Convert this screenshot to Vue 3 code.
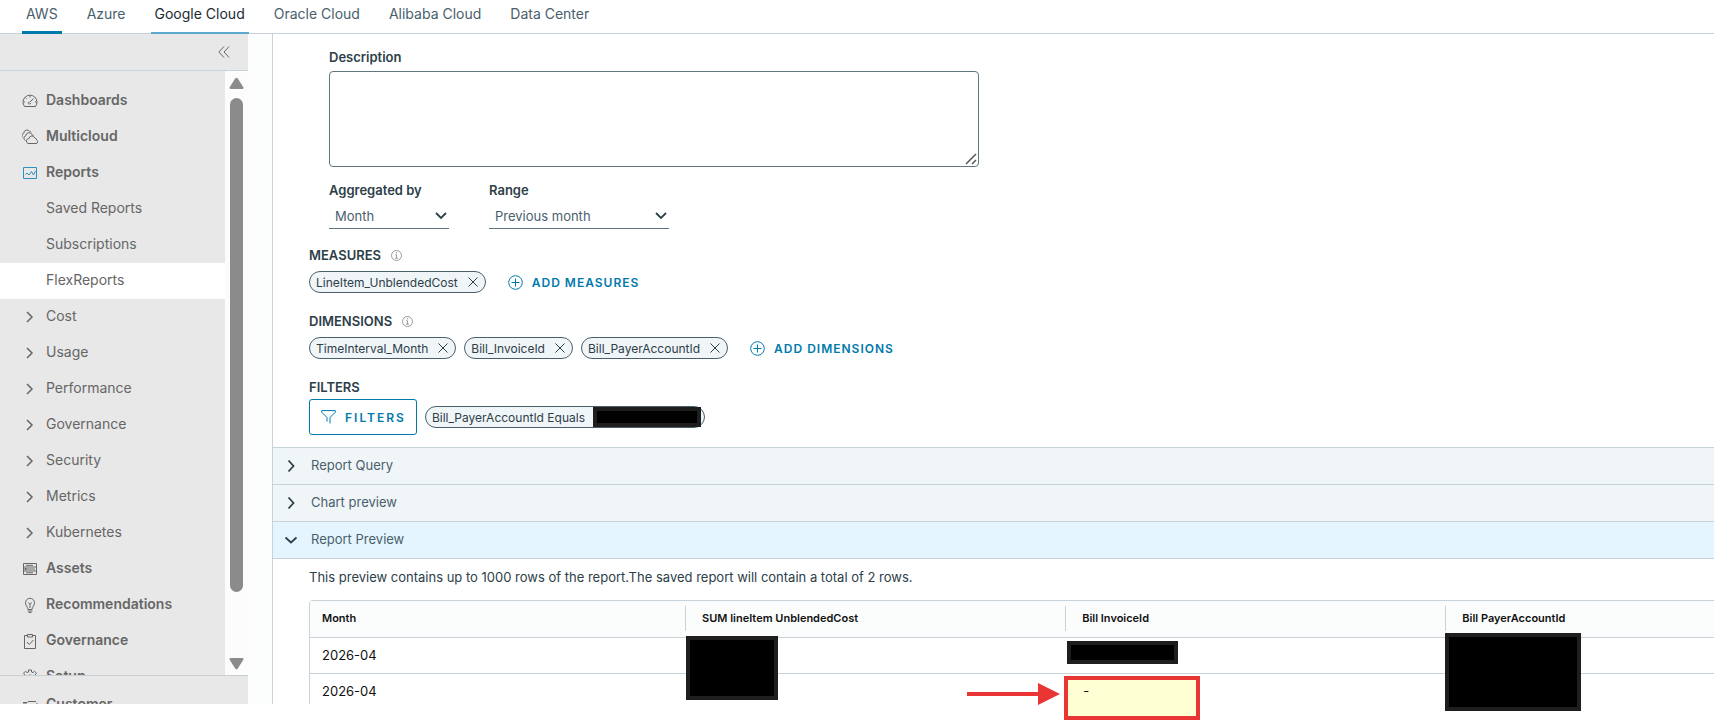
<template>
  <div class="app">
    <header class="tabs">
      <a
        v-for="tab in tabs"
        :key="tab"
        href="#"
        :class="['tab', { active: tab === 'AWS', hovered: tab === 'Google Cloud' }]"
        @click.prevent
      >{{ tab }}</a>
    </header>

    <div class="body">
      <aside class="sidebar">
        <div class="sidebar-top">
          <button class="collapse" aria-label="Collapse menu">
            <svg width="12" height="12" viewBox="0 0 12 12"><path d="M6 .5.8 6 6 11.5M11.2.5 6 6l5.2 5.5" /></svg>
          </button>
        </div>
        <div class="sidebar-scroll">
          <nav class="nav">
            <a
              v-for="item in menu"
              :key="item.icon + item.name"
              href="#"
              :class="['nav-item', item.type, { selected: item.name === 'FlexReports' }]"
              @click.prevent
            >
              <span class="nav-icon">
                <svg v-if="item.icon === 'chevron'" class="chevron" width="16" height="16" viewBox="0 0 16 16"><path d="m5 3 5 5-5 5" /></svg>
                <svg v-else-if="item.icon" :class="item.icon" width="16" height="16" viewBox="0 0 16 16"><path :d="icons[item.icon]" /></svg>
              </span>
              <span class="nav-text">{{ item.name }}</span>
            </a>
          </nav>
          <div class="scrollbar">
            <svg width="15" height="13" viewBox="0 0 15 13"><path d="M6.2 1.500q1.300-1.700 2.600 0l5.400 8.500q.9 2-1 2H1.800q-1.900 0-1-2z" /></svg>
            <div class="thumb"></div>
            <svg width="15" height="13" viewBox="0 0 15 13"><path d="M6.2 11.500q1.300 1.700 2.600 0l5.400-8.500q.9-2-1-2H1.800q-1.900 0-1 2z" /></svg>
          </div>
        </div>
        <div class="sidebar-bottom">
          <a href="#" class="nav-item group" @click.prevent>
            <span class="nav-icon">
              <svg width="16" height="16" viewBox="0 0 16 16"><path :d="icons.customer" /></svg>
            </span>
            <span class="nav-text">Customer</span>
          </a>
        </div>
      </aside>

      <main class="content">
        <form class="form" @submit.prevent>
          <div class="fields">
            <label class="label" for="description">Description</label>
            <div class="textarea-wrap">
              <textarea id="description" v-model="description"></textarea>
              <svg class="grip" width="12" height="12" viewBox="0 0 12 12"><path d="M1 11 11 1M7 11l4-4" /></svg>
            </div>
            <div class="selects">
              <div class="month">
                <label class="label" for="aggregated">Aggregated by</label>
                <div class="select-wrap">
                  <select id="aggregated"><option>Month</option></select>
                  <svg width="12" height="8" viewBox="0 0 12 8"><path d="M1 1l5 5 5-5" /></svg>
                </div>
              </div>
              <div class="range">
                <label class="label" for="range">Range</label>
                <div class="select-wrap">
                  <select id="range"><option>Previous month</option></select>
                  <svg width="12" height="8" viewBox="0 0 12 8"><path d="M1 1l5 5 5-5" /></svg>
                </div>
              </div>
            </div>
          </div>

          <section v-for="group in groups" :key="group.title" class="group-block">
            <h3 class="label heading">
              {{ group.title }}
              <svg class="info" width="11" height="11" viewBox="0 0 11 11"><circle cx="5.5" cy="5.5" r="5" /><path d="M5.500 2.200v1.200M4.200 4.800h1.300V8M4 8.200h3" /></svg>
            </h3>
            <div class="chips">
              <span v-for="chip in group.chips" :key="chip" class="chip">
                {{ chip }}
                <button class="remove" type="button" :aria-label="'Remove ' + chip">
                  <svg width="10" height="10" viewBox="0 0 10 10"><path d="m.5.5 9 9m0-9-9 9" /></svg>
                </button>
              </span>
              <button class="add" type="button">
                <svg width="15" height="15" viewBox="0 0 15 15"><circle cx="7.5" cy="7.5" r="6.8" /><path d="M7.500 3.500v8m-4-4h8" /></svg>
                {{ group.action }}
              </button>
            </div>
          </section>

          <section>
            <h3 class="label heading">FILTERS</h3>
            <div class="chips filters">
              <button class="filter-btn" type="button">
                <svg width="15" height="14" viewBox="0 0 15 14"><path d="M.7.6h13.600v1.600L9 7.500v6M.7.6v1.600L6 7.500v4" /></svg>
                FILTERS
              </button>
              <span class="chip filter-chip">Bill_PayerAccountId Equals<span class="redacted inline"></span></span>
            </div>
          </section>
        </form>

        <div class="accordion">
          <button v-for="panel in panels" :key="panel" :class="['panel', { open: panel === 'Report Preview' }]">
            <svg width="14" height="14" viewBox="0 0 14 14"><path d="m4.500 1.500 5 5.500-5 5.500" /></svg>
            <span>{{ panel }}</span>
          </button>
        </div>

        <section class="preview">
          <p>This preview contains up to 1000 rows of the report.The saved report will contain a total of 2 rows.</p>
          <table>
            <thead>
              <tr>
                <th v-for="col in columns" :key="col"><span>{{ col }}</span></th>
              </tr>
            </thead>
            <tbody>
              <tr>
                <td>2026-04</td>
                <td><span class="redacted cost"></span></td>
                <td><span class="redacted invoice"></span></td>
                <td><span class="redacted payer"></span></td>
              </tr>
              <tr>
                <td>2026-04</td>
                <td></td>
                <td>
                  <svg class="arrow" width="94" height="24" viewBox="0 0 94 24"><path d="M0 10h71V1l22 11-22 11v-9H0z" /></svg>
                  <span class="callout">-</span>
                </td>
                <td></td>
              </tr>
            </tbody>
          </table>
        </section>
      </main>
    </div>
  </div>
</template>

<script setup>
import { ref } from 'vue'

const description = ref('')

const tabs = ['AWS', 'Azure', 'Google Cloud', 'Oracle Cloud', 'Alibaba Cloud', 'Data Center']

const menu = [
  { name: 'Dashboards', icon: 'gauge', type: 'group' },
  { name: 'Multicloud', icon: 'clouds', type: 'group' },
  { name: 'Reports', icon: 'chart', type: 'group' },
  { name: 'Saved Reports', icon: '', type: 'child' },
  { name: 'Subscriptions', icon: '', type: 'child' },
  { name: 'FlexReports', icon: '', type: 'child' },
  { name: 'Cost', icon: 'chevron', type: 'child' },
  { name: 'Usage', icon: 'chevron', type: 'child' },
  { name: 'Performance', icon: 'chevron', type: 'child' },
  { name: 'Governance', icon: 'chevron', type: 'child' },
  { name: 'Security', icon: 'chevron', type: 'child' },
  { name: 'Metrics', icon: 'chevron', type: 'child' },
  { name: 'Kubernetes', icon: 'chevron', type: 'child' },
  { name: 'Assets', icon: 'assets', type: 'group' },
  { name: 'Recommendations', icon: 'bulb', type: 'group' },
  { name: 'Governance', icon: 'clipboard', type: 'group' },
  { name: 'Setup', icon: 'gear', type: 'group' }
]

const icons = {
  gauge: 'M2.500 13.500A7 7 0 1 1 13.500 13.500zM8 3v1.500M1.500 9H3M13 9h1.500M3.500 4.800l1 1M7.500 9.500l4-4M7 8.800a1.200 1.200 0 1 0 1.700 1.200',
  clouds: 'M6 14.500h8a1.800 1.800 0 0 0 .8-3.400 2.500 2.500 0 0 0-2-2.100A3 3 0 0 0 7 9.500a2.600 2.600 0 0 0-1 5M3.500 11.500a2.400 2.400 0 0 1 .3-4.600 3.200 3.200 0 0 1 6.200-1.100 2 2 0 0 1 1.500 1M1 8.500a2.400 2.400 0 0 1 .8-4.300 3.200 3.200 0 0 1 5.900-1.700 2 2 0 0 1 1.600.8',
  chart: 'M1.500 2.500h13v11h-13zM3.500 9.500l1.500-1.500L7 10l2.500-3.500L11.500 10l2-4',
  assets: 'M1.500 2.500h13v11h-13zM1.500 6h13M1.500 10h13M4 4.300h7M4 8h9M4 11.800h7M2.500 7.500h2M2.500 8.500h2',
  bulb: 'M6 12.500C6 10 3.500 9 3.500 5.800a4.500 4.500 0 0 1 9 0C12.500 9 10 10 10 12.500zM5.500 14h5M6.500 15.500h3M8 11V7.500M6.500 5.500 8 7.500l1.500-2',
  clipboard: 'M5 2.500H2.500v13h11v-13H11M5.500 1.500h5v2.500h-5zM5 9l2.200 2.500L11.500 7',
  gear: 'M6.500 1h3v2l1.500.6 1.500-1.400 2 2L13 6l.5 1.500h2v3h-2L13 12l1.500 1.500-2 2L11 14l-1.500.5v1h-3v-1L5 14l-1.500 1.500-2-2L3 12l-.5-1.500h-2v-3h2L3 6 1.500 4.200l2-2L5 3.600 6.500 3zM8 6a3 3 0 1 0 .1 0',
  customer: 'M1 5.500h4l1-1h8M1 7h4v6H1M15 6v6'
}

const groups = [
  { title: 'MEASURES', chips: ['LineItem_UnblendedCost'], action: 'ADD MEASURES' },
  {
    title: 'DIMENSIONS',
    chips: ['TimeInterval_Month', 'Bill_InvoiceId', 'Bill_PayerAccountId'],
    action: 'ADD DIMENSIONS'
  }
]

const panels = ['Report Query', 'Chart preview', 'Report Preview']
const columns = ['Month', 'SUM lineItem UnblendedCost', 'Bill InvoiceId', 'Bill PayerAccountId']
</script>

<style>
body {
  overflow: hidden;
  background: #fff;
}
</style>

<style scoped>
.app {
  height: 100vh;
  padding-bottom: 16px;
  display: flex;
  flex-direction: column;
  color: #2d4048;
  font-family: Inter, "Liberation Sans", sans-serif;
  font-size: 13px;
}

.app *,
.app {
  box-sizing: border-box;
}

button {
  padding: 0;
  border: none;
  background: none;
  font: inherit;
  color: inherit;
  cursor: pointer;
}

svg {
  flex: none;
  fill: none;
  stroke: currentColor;
}

.tabs {
  flex: none;
  display: flex;
  gap: 21px;
  height: 34px;
  padding-left: 22px;
  border-bottom: 1px solid #c8d3d9;
}

.tab {
  height: 34px;
  padding: 0 4px;
  font-size: 14px;
  line-height: 28px;
  color: #49606c;
  text-decoration: none;
}

.tab.active {
  border-bottom: 3px solid #0079ad;
}

.tab.hovered {
  color: #1b2a32;
  border-bottom: 2px solid #5aa9cc;
}

.body {
  flex: 1;
  display: flex;
  min-height: 0;
}

.sidebar {
  flex: none;
  display: flex;
  flex-direction: column;
  width: 248px;
  background: #e8e8e8;
  color: #666;
}

.sidebar-top {
  flex: none;
  display: flex;
  justify-content: flex-end;
  align-items: center;
  height: 37px;
  padding-right: 18px;
  border-bottom: 1px solid #c8d3d9;
}

.collapse {
  display: flex;
}

.sidebar-scroll {
  flex: 1;
  display: flex;
  min-height: 0;
}

.nav {
  flex: 1;
  padding-top: 12px;
  overflow: hidden;
}

.nav-item {
  display: flex;
  align-items: center;
  gap: 8px;
  height: 36px;
  padding-left: 22px;
  font-size: 14px;
  line-height: 20px;
  color: #666;
  text-decoration: none;
}

.nav-item.group {
  font-weight: 600;
}

.nav-item.selected {
  background: #fff;
}

.nav-text {
  padding-bottom: 2px;
}

.nav-icon {
  display: flex;
  width: 16px;
  height: 16px;
}

.chevron {
  stroke-width: 1.5;
}

.chart {
  color: #2f8fc0;
}

.scrollbar {
  flex: none;
  display: flex;
  flex-direction: column;
  align-items: center;
  width: 23px;
  padding: 6px 0 5px;
  background: #fcfcfc;
}

.scrollbar svg {
  fill: #8b8b8b;
  stroke: none;
}

.thumb {
  flex: 1;
  width: 13px;
  margin: 8px 0 65px;
  border-radius: 7px;
  background: #8b8b8b;
}

.sidebar-bottom {
  flex: none;
  height: 29px;
  padding-top: 11px;
  border-top: 1px solid #c8d0d3;
  overflow: hidden;
}

.content {
  flex: 1;
  min-width: 0;
  margin-left: 24px;
  border-left: 1px solid #c8d3d9;
  box-shadow: -24px 0 #fcfdfd;
  overflow-x: clip;
}

.form {
  padding: 13px 36px 12px;
}

.fields {
  margin-bottom: 16px;
  padding-left: 20px;
}

.label {
  display: block;
  margin: 0;
  font-size: 13px;
  font-weight: 600;
  line-height: 20px;
}

.textarea-wrap {
  position: relative;
  width: 650px;
  max-width: 100%;
  height: 96px;
  margin: 4px 0 13px;
}

textarea {
  display: block;
  width: 100%;
  height: 100%;
  border: 1px solid #60767f;
  border-radius: 4px;
  background: #fff;
  font: inherit;
  resize: none;
}

.grip {
  position: absolute;
  right: 2px;
  bottom: 2px;
  stroke: #555;
  stroke-width: 1.5;
}

.selects {
  display: flex;
  gap: 40px;
}

.month {
  width: 120px;
}

.range {
  width: 180px;
}

.select-wrap {
  position: relative;
  height: 24px;
  margin-top: 5px;
}

.select-wrap svg {
  position: absolute;
  right: 2px;
  top: 7px;
  stroke-width: 1.8;
  pointer-events: none;
}

select {
  appearance: none;
  width: 100%;
  height: 24px;
  padding: 0 6px 2px;
  border: none;
  border-bottom: 1px solid #60767f;
  border-radius: 0;
  background: transparent;
  font: inherit;
  color: #49606c;
}

.heading {
  display: flex;
  align-items: center;
  gap: 10px;
}

.info {
  color: #999;
}

.group-block {
  margin-bottom: 18px;
}

.chips {
  display: flex;
  align-items: center;
  gap: 8px;
  margin-top: 6px;
}

.chip {
  display: flex;
  align-items: center;
  gap: 10px;
  height: 22px;
  padding: 0 7px 0 6px;
  border: 1px solid #49606c;
  border-radius: 11px;
  background: #f0f5f8;
  font-size: 12px;
  white-space: nowrap;
}

.remove {
  display: flex;
}

.add {
  display: flex;
  align-items: center;
  gap: 9px;
  margin-left: 14px;
  font-size: 12px;
  font-weight: 600;
  letter-spacing: 1px;
  color: #0079ad;
}

.filters {
  margin-top: 2px;
}

.filter-btn {
  display: flex;
  align-items: center;
  gap: 9px;
  height: 36px;
  padding: 0 10px 0 11px;
  border: 1px solid #0079ad;
  border-radius: 3px;
  font-size: 12px;
  font-weight: 600;
  letter-spacing: 2px;
  color: #0079ad;
}

.filter-chip {
  gap: 8px;
  padding-right: 3px;
}

.redacted {
  border: 4px solid #1e1e1e;
  background: #000;
  z-index: 1;
}

.redacted.inline {
  width: 108px;
  height: 20px;
}

.panel {
  display: flex;
  align-items: center;
  gap: 13px;
  width: 100%;
  height: 37px;
  padding-left: 11px;
  border-top: 1px solid #c8d3d9;
  background: #f0f5f8;
  color: #49606c;
}

.panel span {
  padding-bottom: 2px;
}

.panel svg {
  stroke: #2d4048;
  stroke-width: 1.8;
}

.panel.open {
  background: #e4f5fe;
}

.panel.open svg {
  transform: rotate(90deg);
}

.preview {
  padding: 8px 0 0 36px;
  border-top: 1px solid #c8d3d9;
}

.preview p {
  margin: 0 0 13px;
  line-height: 20px;
}

table {
  width: 108%;
  table-layout: fixed;
  border-collapse: separate;
  border-spacing: 0;
  border: 1px solid #c8d3d9;
  border-bottom: none;
  border-radius: 4px 0 0 0;
  color: #111;
}

th {
  height: 36px;
  padding: 0 0 1px;
  background: #fbfdfd;
  font-size: 11px;
  font-weight: 600;
  text-align: left;
}

th:first-child {
  width: 375px;
}

th span {
  display: block;
  padding-left: 16px;
  border-left: 1px solid #c8d3d9;
  line-height: 25px;
}

th:first-child span {
  padding-left: 12px;
  border: none;
}

td {
  position: relative;
  height: 36px;
  padding: 7px 12px 0;
  border-top: 1px solid #c8d3d9;
  line-height: 20px;
  vertical-align: top;
}

tr:last-child td {
  height: 31px;
}

td .redacted,
.callout,
.arrow {
  position: absolute;
}

.cost {
  top: -2px;
  left: 1px;
  width: 92px;
  height: 64px;
}

.invoice {
  top: 3px;
  left: 2px;
  width: 111px;
  height: 23px;
}

.payer {
  top: -5px;
  left: 0;
  width: 136px;
  height: 78px;
}

.callout {
  top: 2px;
  left: -1px;
  width: 136px;
  height: 44px;
  padding: 1px 15px;
  border: 4px solid #ea3535;
  background: #ffffd4;
}

.arrow {
  top: 8px;
  left: -98px;
  fill: #ea3535;
  stroke: none;
}
</style>
